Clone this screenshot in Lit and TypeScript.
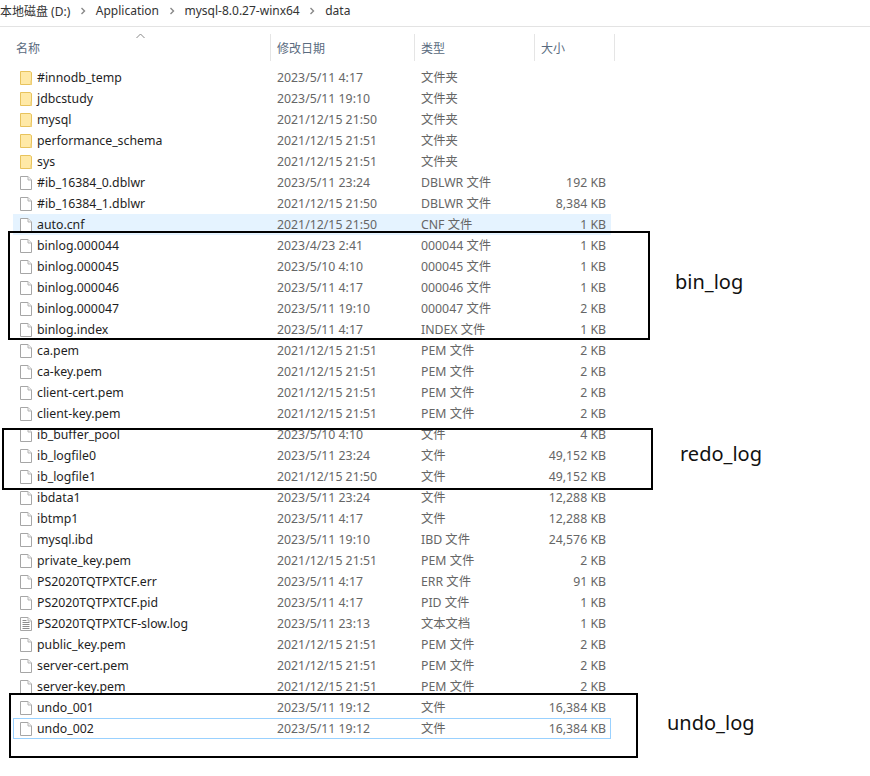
import { LitElement, css, html, svg } from 'lit';
import { customElement } from 'lit/decorators.js';

type Row = [name: string, date: string, type: string, size: string, kind?: string];

const rows: Row[] = [
  ['#innodb_temp', '2023/5/11 4:17', '文件夹', '', 'folder'],
  ['jdbcstudy', '2023/5/11 19:10', '文件夹', '', 'folder'],
  ['mysql', '2021/12/15 21:50', '文件夹', '', 'folder'],
  ['performance_schema', '2021/12/15 21:51', '文件夹', '', 'folder'],
  ['sys', '2021/12/15 21:51', '文件夹', '', 'folder'],
  ['#ib_16384_0.dblwr', '2023/5/11 23:24', 'DBLWR 文件', '192 KB'],
  ['#ib_16384_1.dblwr', '2021/12/15 21:50', 'DBLWR 文件', '8,384 KB'],
  ['auto.cnf', '2021/12/15 21:50', 'CNF 文件', '1 KB', 'hover'],
  ['binlog.000044', '2023/4/23 2:41', '000044 文件', '1 KB'],
  ['binlog.000045', '2023/5/10 4:10', '000045 文件', '1 KB'],
  ['binlog.000046', '2023/5/11 4:17', '000046 文件', '1 KB'],
  ['binlog.000047', '2023/5/11 19:10', '000047 文件', '2 KB'],
  ['binlog.index', '2023/5/11 4:17', 'INDEX 文件', '1 KB'],
  ['ca.pem', '2021/12/15 21:51', 'PEM 文件', '2 KB'],
  ['ca-key.pem', '2021/12/15 21:51', 'PEM 文件', '2 KB'],
  ['client-cert.pem', '2021/12/15 21:51', 'PEM 文件', '2 KB'],
  ['client-key.pem', '2021/12/15 21:51', 'PEM 文件', '2 KB'],
  ['ib_buffer_pool', '2023/5/10 4:10', '文件', '4 KB'],
  ['ib_logfile0', '2023/5/11 23:24', '文件', '49,152 KB'],
  ['ib_logfile1', '2021/12/15 21:50', '文件', '49,152 KB'],
  ['ibdata1', '2023/5/11 23:24', '文件', '12,288 KB'],
  ['ibtmp1', '2023/5/11 4:17', '文件', '12,288 KB'],
  ['mysql.ibd', '2023/5/11 19:10', 'IBD 文件', '24,576 KB'],
  ['private_key.pem', '2021/12/15 21:51', 'PEM 文件', '2 KB'],
  ['PS2020TQTPXTCF.err', '2023/5/11 4:17', 'ERR 文件', '91 KB'],
  ['PS2020TQTPXTCF.pid', '2023/5/11 4:17', 'PID 文件', '1 KB'],
  ['PS2020TQTPXTCF-slow.log', '2023/5/11 23:13', '文本文档', '1 KB', 'text'],
  ['public_key.pem', '2021/12/15 21:51', 'PEM 文件', '2 KB'],
  ['server-cert.pem', '2021/12/15 21:51', 'PEM 文件', '2 KB'],
  ['server-key.pem', '2021/12/15 21:51', 'PEM 文件', '2 KB'],
  ['undo_001', '2023/5/11 19:12', '文件', '16,384 KB'],
  ['undo_002', '2023/5/11 19:12', '文件', '16,384 KB', 'selected'],
];

const crumbs = ['本地磁盘 (D:)', 'Application', 'mysql-8.0.27-winx64', 'data'];

const marks = [
  { cls: 'bin', label: 'bin_log' },
  { cls: 'redo', label: 'redo_log' },
  { cls: 'undo', label: 'undo_log' },
];

function icon(kind?: string) {
  if (kind === 'folder') {
    return svg`<svg class="icon" width="16" height="16" viewBox="0 0 16 16">
      <path d="M2.5 1.5h9.5l1.5 1v12h-11z" fill="#ffe9a6" stroke="#e8c35c"/>
      <path d="M12 10.5h1.5v4H12z" fill="#f3d98c"/>
    </svg>`;
  }
  return svg`<svg class="icon" width="16" height="16" viewBox="0 0 16 16">
    <path d="M2.5 1.5h7.5l3.5 3.5v9.5h-11z" fill="#fff" stroke="#a6a6a6"/>
    <path d="M10 1.5v3.5h3.5" fill="#f2f2f2" stroke="#b5b5b5"/>
    ${kind === 'text'
      ? svg`<path d="M4.5 4.5h4M4.5 6.5h7M4.5 8.5h7M4.5 10.5h7M4.5 12.5h7" stroke="#8c8c8c" fill="none"/>`
      : ''}
  </svg>`;
}

@customElement('app-root')
export class AppRoot extends LitElement {
  static styles = css`
    :host {
      display: block;
      position: relative;
      width: 870px;
      height: 776px;
      overflow: hidden;
      background: #fff;
      font-family: 'Noto Sans', 'Noto Sans CJK SC', sans-serif;
      font-size: 12px;
      color: #1e1e1e;
    }

    .crumbs {
      display: flex;
      align-items: center;
      height: 27px;
      padding-bottom: 5px;
      box-sizing: border-box;
      border-bottom: 1px solid #e3e3e3;
      color: #333;
    }

    .chev {
      width: 25.5px;
      display: flex;
      justify-content: center;
    }

    .head {
      position: relative;
      display: grid;
      grid-template-columns: 271px 144px 120px 80px;
      margin-top: 7px;
      height: 27px;
      color: #5a6b80;
    }

    .head div {
      padding: 5px 0 0 6px;
      border-right: 1px solid #e5e5e5;
      height: 22px;
    }

    .head div:first-of-type {
      padding-left: 16px;
    }

    .sort {
      position: absolute;
      left: 136px;
      top: -1px;
    }

    .list {
      margin: 6px 0 0 13px;
      width: 598px;
    }

    .row {
      display: grid;
      grid-template-columns: 264px 144px 120px 65px;
      height: 21px;
      line-height: 21px;
      font-size: 12.3px;
      color: #666;
      white-space: nowrap;
    }

    .row.hover {
      background: #e5f3ff;
    }

    .row.selected {
      box-shadow: inset 0 0 0 1px #99d1ff;
    }

    .name {
      display: flex;
      align-items: center;
      gap: 3px;
      padding-left: 5px;
      color: #1e1e1e;
    }

    .size {
      text-align: right;
    }

    .icon {
      flex: none;
    }

    .mark {
      position: absolute;
      box-sizing: border-box;
      border: 2px solid #000;
    }

    .mark.bin {
      left: 8px;
      top: 231px;
      width: 642px;
      height: 109px;
    }

    .mark.redo {
      left: 2px;
      top: 428px;
      width: 651px;
      height: 62px;
    }

    .mark.undo {
      left: 9px;
      top: 693px;
      width: 629px;
      height: 65px;
    }

    .label {
      position: absolute;
      font-size: 20px;
      line-height: 28px;
      color: #111;
    }

    .label.bin {
      left: 675px;
      top: 268px;
    }

    .label.redo {
      left: 680px;
      top: 440px;
    }

    .label.undo {
      left: 667px;
      top: 709px;
    }
  `;

  render() {
    return html`
      <nav class="crumbs">
        ${crumbs.map(
          (c, i) => html`
            ${i > 0
              ? html`<span class="chev">
                  <svg width="6" height="8" viewBox="0 0 6 8">
                    <path d="M1.5 1l3 3-3 3" fill="none" stroke="#888" stroke-width="1.4" />
                  </svg>
                </span>`
              : ''}
            <span>${c}</span>
          `
        )}
      </nav>
      <div class="head">
        <svg class="sort" width="9" height="6" viewBox="0 0 9 6">
          <path d="M.5 5l4-4 4 4" fill="none" stroke="#888" />
        </svg>
        <div>名称</div>
        <div>修改日期</div>
        <div>类型</div>
        <div>大小</div>
      </div>
      <div class="list">
        ${rows.map(
          ([name, date, type, size, kind]) => html`
            <div class="row ${kind ?? ''}">
              <span class="name">${icon(kind)}${name}</span>
              <span>${date}</span>
              <span>${type}</span>
              <span class="size">${size}</span>
            </div>
          `
        )}
      </div>
      ${marks.map(
        (m) => html`
          <div class="mark ${m.cls}"></div>
          <div class="label ${m.cls}">${m.label}</div>
        `
      )}
    `;
  }
}
